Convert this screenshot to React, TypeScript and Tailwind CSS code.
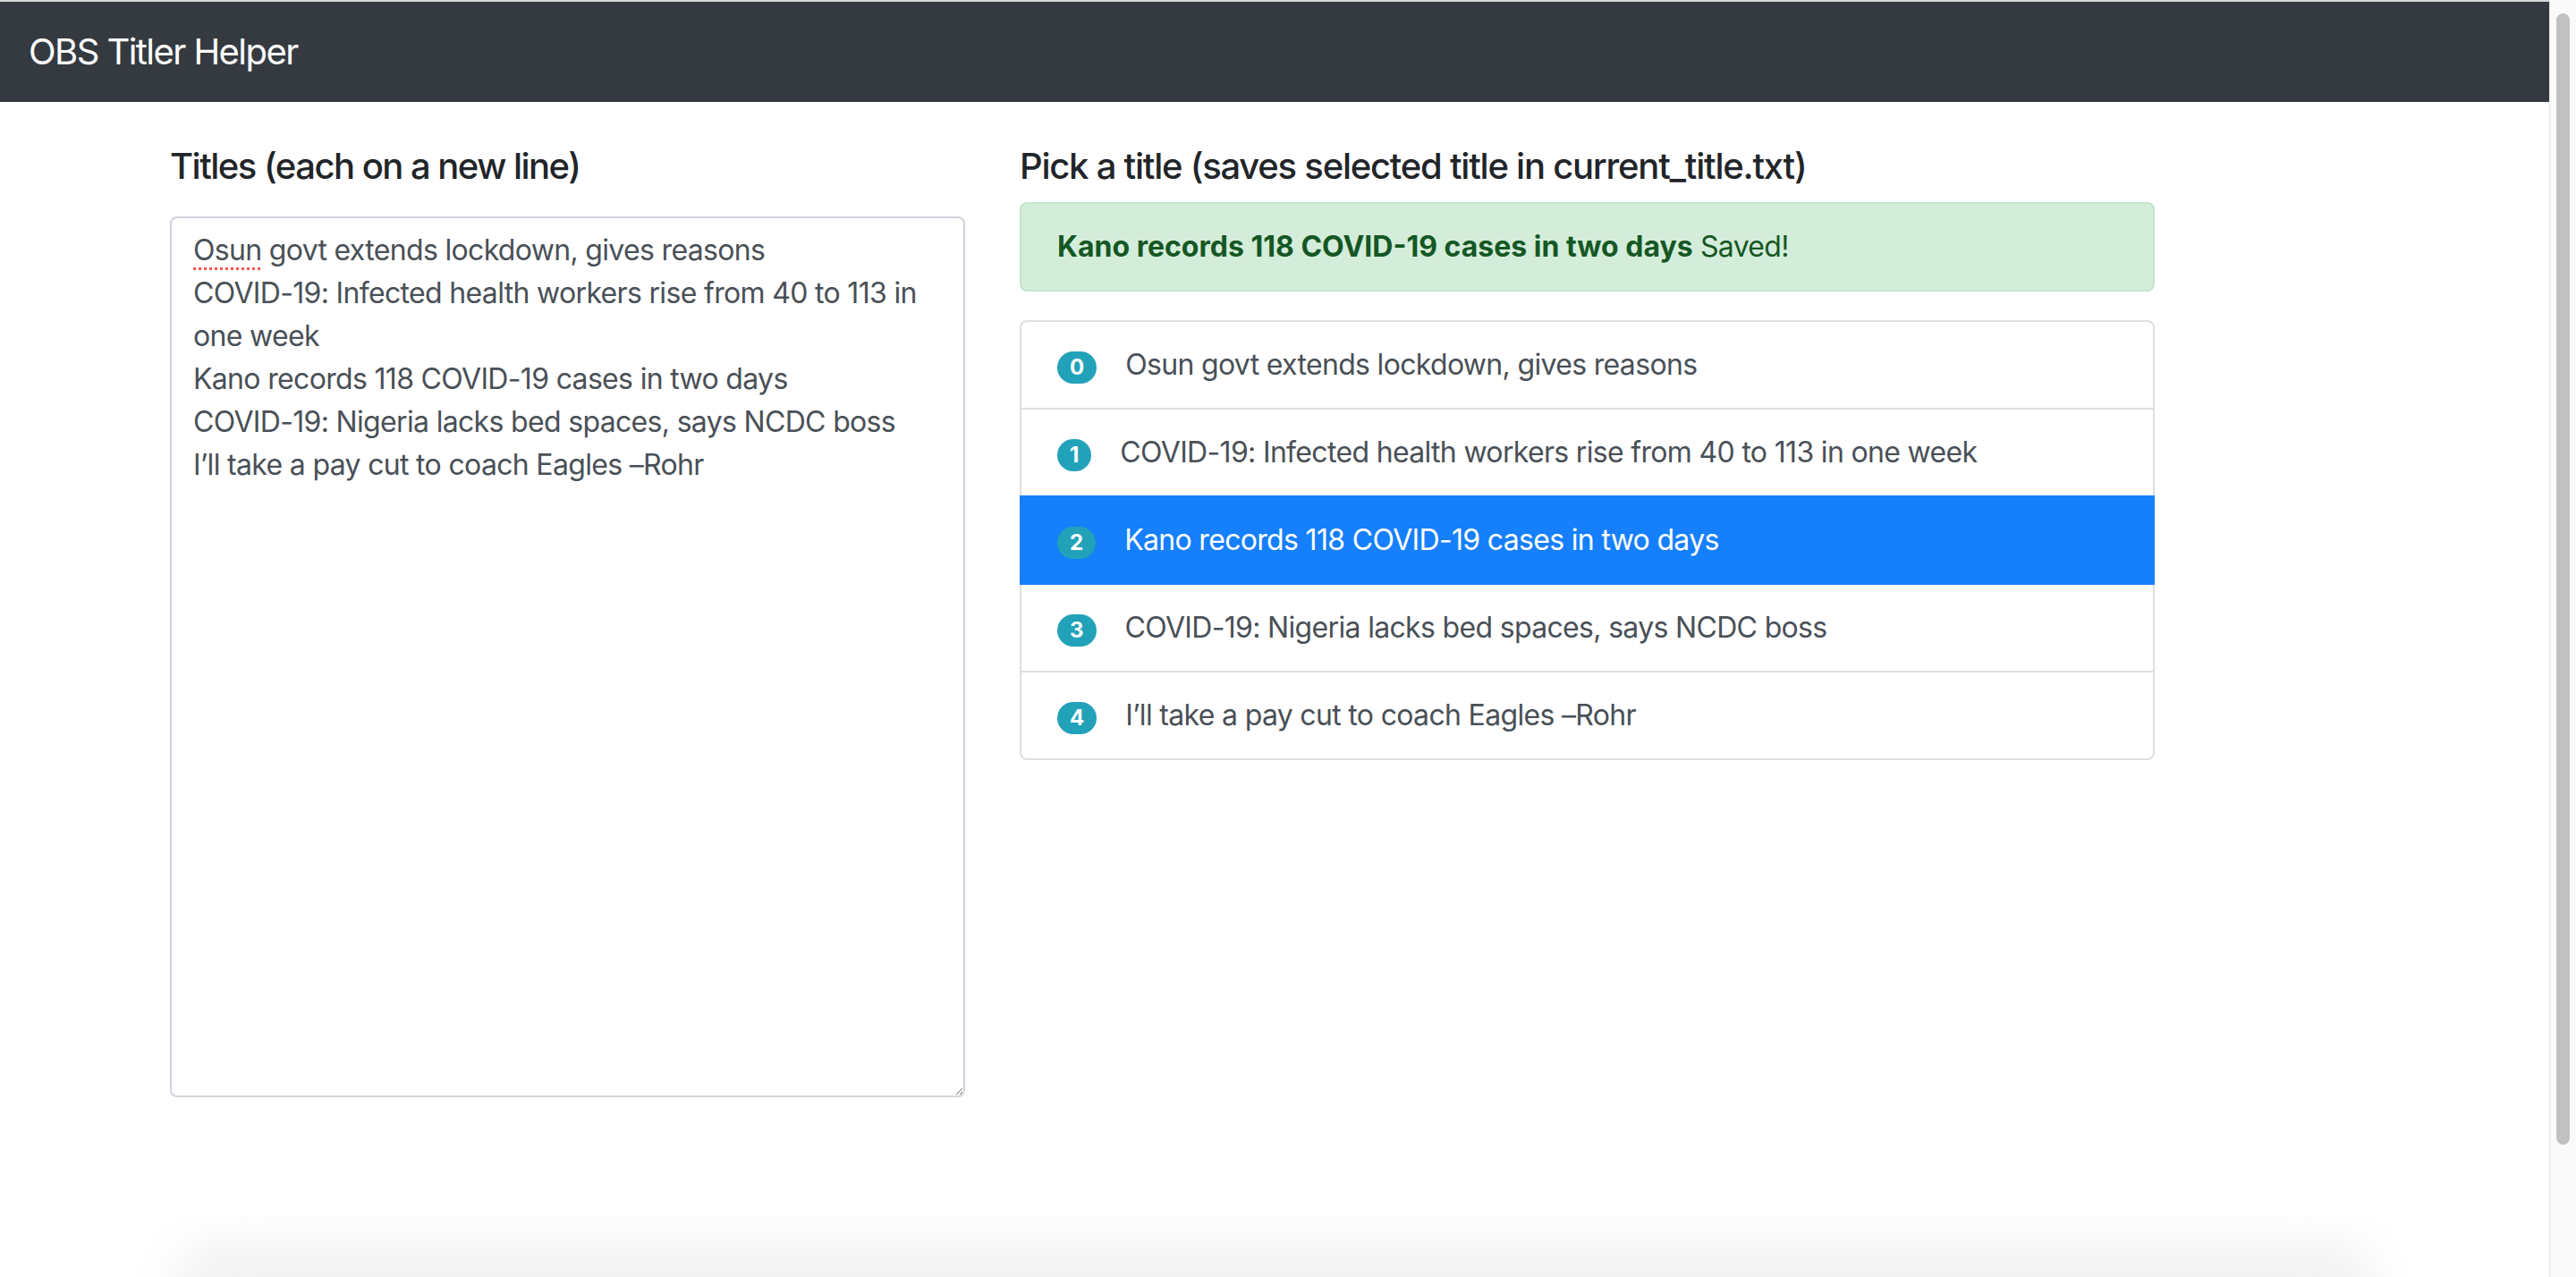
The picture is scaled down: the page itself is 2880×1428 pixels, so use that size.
import React from "react";

const titles = [
  "Osun govt extends lockdown, gives reasons",
  "COVID-19: Infected health workers rise from 40 to 113 in one week",
  "Kano records 118 COVID-19 cases in two days",
  "COVID-19: Nigeria lacks bed spaces, says NCDC boss",
  "I’ll take a pay cut to coach Eagles –Rohr",
];

const selected = 2;

const font = { fontFamily: "Inter, 'Noto Sans', sans-serif" };

function TitleList() {
  return (
    <ul className="flex flex-col">
      {titles.map((t, i) => {
        const active = i === selected;
        const first = i === 0;
        const last = i === titles.length - 1;
        return (
          <li
            key={i}
            className={`relative border-2 px-[40px] py-[24px] text-[32px] leading-[48px] ${
              first ? "rounded-t-[8px]" : "-mt-[2px]"
            } ${last ? "rounded-b-[8px]" : ""} ${
              active
                ? "z-10 border-[#167ffb] bg-[#167ffb] text-white"
                : "border-[#dfdfdf] bg-white text-[#495057]"
            }`}
          >
            <span className="mr-[32px] inline-block rounded-full bg-[#22a2b8] px-[14px] py-[6px] text-[24px] font-bold leading-none tracking-normal text-white">
              {i}
            </span>
            {t}
          </li>
        );
      })}
    </ul>
  );
}

export default function App() {
  return (
    <div className="flex h-[1428px] w-full overflow-hidden bg-white tracking-[-0.042em]" style={font}>
      <div className="flex min-w-0 flex-1 flex-col">
        {/* Навбар */}
        <nav className="flex h-[114px] items-center border-t-2 border-[#d6d6d6] bg-[#343a40] px-[32px]">
          <span className="text-[40px] leading-[60px] tracking-[-0.039em] text-white">OBS Titler Helper</span>
        </nav>

        <div className="flex gap-[61px] pl-[190px] pt-[48px]">
          {/* Левая колонка */}
          <div className="flex w-[889px] flex-col">
            <h5 className="mb-[32px] text-[40px] font-medium leading-[48px] tracking-[-0.038em] text-[#212529]">
              Titles (each on a new line)
            </h5>
            <div className="h-[985px] resize overflow-auto rounded-[8px] border-2 border-[#ced4da] px-[24px] py-[12px] text-[32px] leading-[48px] text-[#495057]">
              {titles.map((t, i) =>
                i === 0 ? (
                  <div key={i}>
                    <span className="underline decoration-[#f25757] decoration-dotted decoration-[3px] underline-offset-[8px]">
                      Osun
                    </span>{" "}
                    govt extends lockdown, gives reasons
                  </div>
                ) : (
                  <div key={i}>{t}</div>
                )
              )}
            </div>
          </div>

          {/* Правая колонка */}
          <div className="flex w-[1269px] flex-col">
            <h5 className="mb-[16px] text-[40px] font-medium leading-[48px] tracking-[-0.031em] text-[#212529]">
              Pick a title (saves selected title in current_title.txt)
            </h5>
            <div className="mb-[32px] rounded-[8px] border-2 border-[#c3e6cb] bg-[#d4edda] px-[40px] py-[24px] text-[32px] leading-[48px] text-[#155724]">
              <b className="font-bold tracking-normal">{titles[selected]}</b> Saved!
            </div>
            <TitleList />
          </div>
        </div>

        <div className="flex-1" />
        {/* тень снизу */}
        <div className="h-[68px] overflow-hidden px-[190px]">
          <div className="mt-[24px] h-[160px] rounded-[60px] bg-[#f3f3f3] blur-[24px]" />
        </div>
      </div>

      {/* Скроллбар */}
      <div className="flex w-[30px] flex-col border-l border-[#e6e6e6] bg-[#fafafa] pl-[7px] pt-[15px]">
        <div className="h-[1265px] w-[15px] rounded-full bg-[#c1c1c1]" />
      </div>
    </div>
  );
}
